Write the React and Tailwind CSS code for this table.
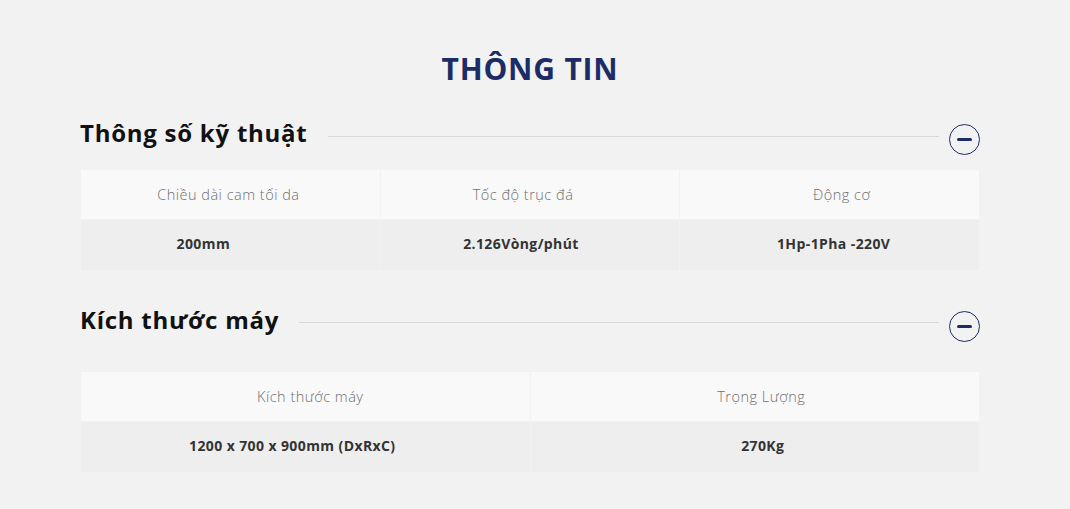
function MinusCircle() {
  return (
    <span className="flex h-[31px] w-[31px] shrink-0 items-center justify-center rounded-full border border-[#1b2c66]">
      <span className="block h-[3px] w-[15px] rounded-sm bg-[#1b2c66]" />
    </span>
  );
}

function SectionHeader({ title, lineOffset }) {
  return (
    <div className="flex items-center">
      <h3 className="text-[24px] font-bold leading-none tracking-[0.75px] text-[#111]">{title}</h3>
      <div className={`ml-5 h-px flex-1 bg-[#d9d9d9] ${lineOffset}`} />
      <div className="ml-[10px] mt-[14px]">
        <MinusCircle />
      </div>
    </div>
  );
}

// each cell carries its own small padding so text sits where the original puts it
function SpecTable({ cols, labels, values }) {
  return (
    <div className={`mx-px grid gap-px ${cols}`}>
      {labels.map(([label, pad]) => (
        <div
          key={label}
          className={`flex h-[49px] items-center justify-center bg-[#f9f9f9] text-[14.5px] font-light tracking-[0.5px] text-[#6f6f6f] ${pad}`}
        >
          {label}
        </div>
      ))}
      {values.map(([value, pad]) => (
        <div
          key={value}
          className={`flex h-[50px] items-center justify-center bg-[#eeeeee] pb-[3px] text-[14px] font-bold tracking-[0.4px] text-[#333] ${pad}`}
        >
          {value}
        </div>
      ))}
    </div>
  );
}

export default function App() {
  return (
    <div className="h-[509px] w-full bg-[#f2f2f2] font-['Open_Sans',sans-serif]">
      <div className="ml-[80px] w-[900px] pt-[54px]">
        <h2 className="text-center text-[30px] font-bold leading-none tracking-[0.8px] text-[#1b2c66]">THÔNG TIN</h2>

        <div className="mt-[26px]">
          <SectionHeader title="Thông số kỹ thuật" lineOffset="mt-[8px]" />
        </div>
        <div className="mt-[15px]">
          <SpecTable
            cols="grid-cols-3"
            labels={[
              ["Chiều dài cam tối da", "pr-[4px]"],
              ["Tốc độ trục đá", "pr-[14px]"],
              ["Động cơ", "pl-[24px]"],
            ]}
            values={[
              ["200mm", "pr-[54px]"],
              ["2.126Vòng/phút", "pr-[18px]"],
              ["1Hp-1Pha -220V", "pl-[8px]"],
            ]}
          />
        </div>

        <div className="mt-[27px]">
          <SectionHeader title="Kích thước máy" lineOffset="mt-[6px]" />
        </div>
        <div className="mt-[30px]">
          <SpecTable
            cols="grid-cols-2"
            labels={[
              ["Kích thước máy", "pl-[10px]"],
              ["Trọng Lượng", "pl-[13px]"],
            ]}
            values={[
              ["1200 x 700 x 900mm (DxRxC)", "pr-[26px]"],
              ["270Kg", "pl-[16px]"],
            ]}
          />
        </div>
      </div>
    </div>
  );
}
